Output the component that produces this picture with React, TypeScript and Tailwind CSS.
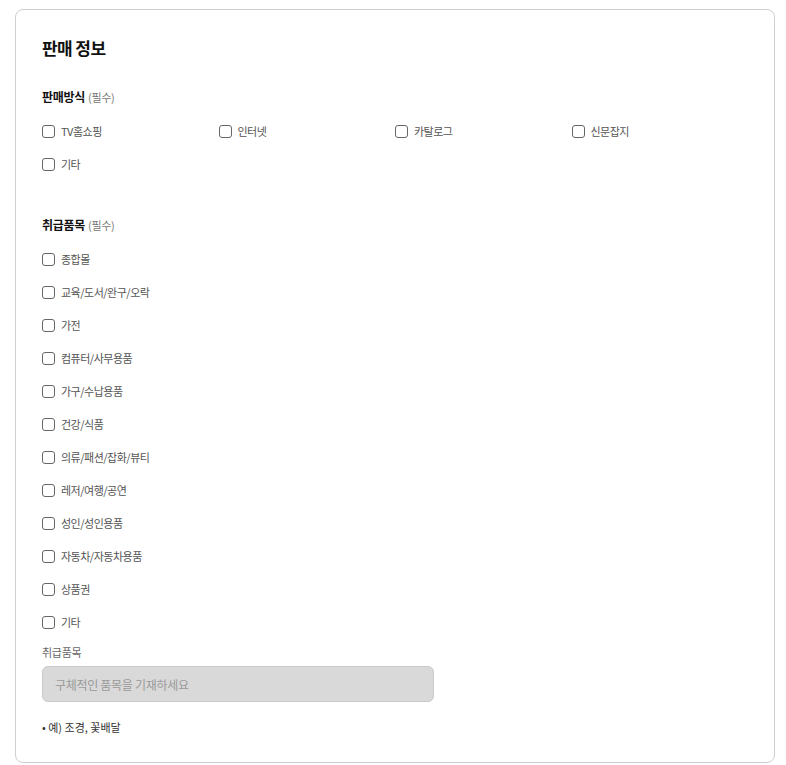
import React from 'react';

const methods = ['TV홈쇼핑', '인터넷', '카탈로그', '신문잡지', '기타'];
const items = [
  '종합몰',
  '교육/도서/완구/오락',
  '가전',
  '컴퓨터/사무용품',
  '가구/수납용품',
  '건강/식품',
  '의류/패션/잡화/뷰티',
  '레저/여행/공연',
  '성인/성인용품',
  '자동차/자동차용품',
  '상품권',
  '기타',
];

export default function App() {
  return (
    <div
      className="min-h-screen bg-white pl-[15px] pr-[11px] pt-[9px] pb-[2px]"
      style={{ fontFamily: '"Noto Sans CJK KR", "Noto Sans", sans-serif' }}
    >
      <div className="rounded-[8px] border border-[#cfcfcf] px-[26px] pt-[26px] pb-[26px]">
        <h2 className="text-[17px] font-bold leading-[24px] tracking-[-0.6px] text-[#111]">판매 정보</h2>

        {/* 판매방식 */}
        <SectionLabel title="판매방식" className="mt-[28px]" />
        <div className="mt-[15px] grid grid-cols-4 gap-y-[13px]">
          {methods.map((m) => (
            <CheckItem key={m} label={m} />
          ))}
        </div>

        {/* 취급품목 */}
        <SectionLabel title="취급품목" className="mt-[42px]" />
        <div className="mt-[15px] flex flex-col gap-[13px]">
          {items.map((m, i) => (
            <CheckItem key={i} label={m} />
          ))}
        </div>

        <p className="mt-[12px] text-[11px] leading-[16px] tracking-[-0.3px] text-[#666]">취급품목</p>
        <input
          disabled
          placeholder="구체적인 품목을 기재하세요"
          className="mt-[6px] block h-[36px] w-[392px] rounded-[6px] border border-[#c9c9c9] bg-[#d9d9d9] px-[12px] text-[12px] tracking-[-0.3px] text-[#333] placeholder:text-[#9a9a9a]"
        />
        <p className="mt-[16px] text-[11px] leading-[18px] text-[#333]">• 예) 조경, 꽃배달</p>
      </div>
    </div>
  );
}

function SectionLabel({ title, className }: { title: string; className?: string }) {
  return (
    <div className={`flex items-baseline gap-[3px] leading-[18px] ${className}`}>
      <span className="text-[12px] font-bold tracking-[-0.3px] text-[#111]">{title}</span>
      <span className="text-[11px] tracking-[-0.3px] text-[#777]">(필수)</span>
    </div>
  );
}

function CheckItem({ label }: { label: string }) {
  return (
    <label className="flex h-[20px] items-center gap-[6px]">
      <span className="h-[13px] w-[13px] rounded-[3px] border border-[#666] bg-white" />
      <span className="text-[11px] tracking-[-0.5px] text-[#555]">{label}</span>
    </label>
  );
}
